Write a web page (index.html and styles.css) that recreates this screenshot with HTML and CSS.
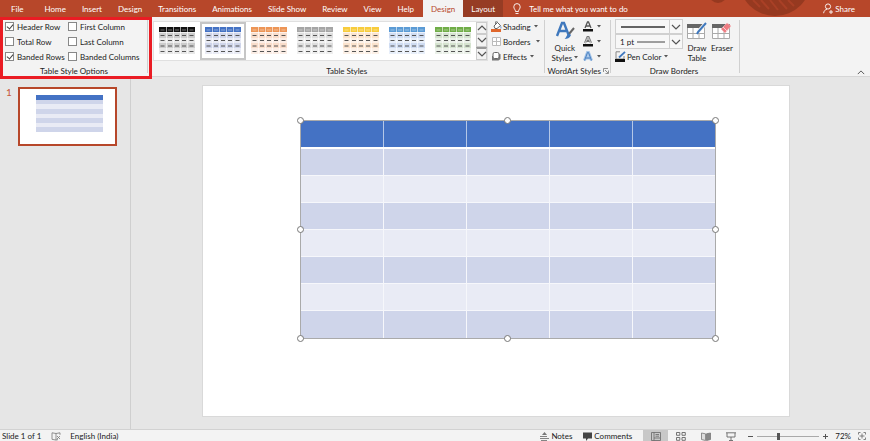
FILE: index.html
```html
<!DOCTYPE html>
<html lang="en">
<head>
  <meta charset="utf-8">
  <title>Presentation - Table Design</title>
  <link rel="stylesheet" href="styles.css">
</head>
<body>
  <svg class="symbols" aria-hidden="true">
    <symbol id="swatch" viewBox="0 0 36 28">
      <rect class="sw-band" width="36" height="27"/>
      <rect class="sw-light" y="11" width="36" height="5"/>
      <rect class="sw-light" y="21" width="36" height="6"/>
      <rect class="sw-head" width="36" height="5"/>
      <path class="sw-grid" d="M7.500 0v28M14.500 0v28M21.500 0v28M28.500 0v28M0 5.500h36"/>
      <path class="sw-dash-head" d="M1.500 3h4M9 3h4M16 3h4M23 3h4M30.500 3h4"/>
      <path class="sw-dash" d="M1.500 8.500h4M9 8.500h4M16 8.500h4M23 8.500h4M30.500 8.500h4M1.500 13.500h4M9 13.500h4M16 13.500h4M23 13.500h4M30.500 13.500h4M1.500 19h4M9 19h4M16 19h4M23 19h4M30.500 19h4M1.500 24.500h4M9 24.500h4M16 24.500h4M23 24.500h4M30.500 24.500h4"/>
    </symbol>
    <symbol id="chevron" viewBox="0 0 10 6"><path d="M1 1l4 4 4-4" fill="none" stroke="#555" stroke-width="1.200"/></symbol>
    <symbol id="caret" viewBox="0 0 4 3"><path d="M0 0h4L2 2.500z" fill="#555"/></symbol>
  </svg>

  <header class="tabbar">
    <nav class="tabs">
      <button class="tab file">File</button>
      <button class="tab">Home</button>
      <button class="tab">Insert</button>
      <button class="tab">Design</button>
      <button class="tab">Transitions</button>
      <button class="tab">Animations</button>
      <button class="tab">Slide Show</button>
      <button class="tab">Review</button>
      <button class="tab">View</button>
      <button class="tab">Help</button>
      <button class="tab context active">Design</button>
      <button class="tab context">Layout</button>
      <button class="tell-me">
        <svg width="8" height="12" viewBox="0 0 8 12" fill="none" stroke="#fff"><path d="M2.500 8.500C2.500 6.500.8 6 .8 3.800a3.200 3.200 0 0 1 6.400 0C7.200 6 5.500 6.500 5.500 8.500zM2.500 10.500h3" stroke-width=".9"/></svg>
        Tell me what you want to do
      </button>
    </nav>
    <svg class="ornament" width="130" height="17" viewBox="0 0 130 17" aria-hidden="true">
      <circle cx="40" cy="-6" r="9" fill="#963920"/>
      <circle cx="97" cy="-20" r="36" fill="#963920"/>
      <path d="M75 0l7 7M83 0l8 9M92 0l8 10M101 0l8 9M110 0l6 6" stroke="#a94026" stroke-width="2"/>
    </svg>
    <button class="share">
      <svg width="10" height="11" viewBox="0 0 10 11" fill="none" stroke="#fff" stroke-width=".9"><circle cx="5" cy="3.500" r="2.600"/><path d="M.6 10.200c.3-2.300 1.600-3.600 3.400-4M6 9h4M8 7v4"/></svg>
      Share
    </button>
  </header>

  <section class="ribbon">
    <div class="group options">
      <div class="group-body checks">
        <label><input type="checkbox" checked>Header Row</label>
        <label><input type="checkbox">First Column</label>
        <label><input type="checkbox">Total Row</label>
        <label><input type="checkbox">Last Column</label>
        <label><input type="checkbox" checked>Banded Rows</label>
        <label><input type="checkbox">Banded Columns</label>
      </div>
      <div class="group-name">Table Style Options</div>
      <div class="highlight"></div>
    </div>

    <div class="group table-styles">
      <div class="group-body">
        <div class="gallery">
          <button class="swatch black" aria-label="Black style"><svg><use href="#swatch"/></svg></button>
          <button class="swatch blue selected" aria-label="Blue style"><svg><use href="#swatch"/></svg></button>
          <button class="swatch orange" aria-label="Orange style"><svg><use href="#swatch"/></svg></button>
          <button class="swatch gray" aria-label="Gray style"><svg><use href="#swatch"/></svg></button>
          <button class="swatch gold" aria-label="Gold style"><svg><use href="#swatch"/></svg></button>
          <button class="swatch sky" aria-label="Light blue style"><svg><use href="#swatch"/></svg></button>
          <button class="swatch green" aria-label="Green style"><svg><use href="#swatch"/></svg></button>
          <div class="scroller">
            <button aria-label="Scroll up"><svg class="up" width="10" height="6"><use href="#chevron"/></svg></button>
            <button aria-label="Scroll down"><svg width="10" height="6"><use href="#chevron"/></svg></button>
            <button class="more" aria-label="More styles"><svg width="10" height="6"><use href="#chevron"/></svg></button>
          </div>
        </div>
        <div class="commands">
          <button class="command">
            <svg width="11" height="11" viewBox="0 0 11 11"><path d="M3 5l3.500-3.500L9.500 4.500 6 7.500H4z" fill="#fff" stroke="#666"/><path d="M4.500 3V.8h1.800V2" fill="none" stroke="#666" stroke-width=".8"/><path d="M9.500 4.500c1.300 1 1 3 .2 3.500z" fill="#3f7ac0"/><path d="M0 8h10v3H0z" fill="#e0672c"/></svg>
            Shading<svg class="caret"><use href="#caret"/></svg>
          </button>
          <button class="command borders">
            <svg width="11" height="11" viewBox="0 0 11 11"><path d="M1.500 1.500h8v8h-8zM5.500 1.500v8M1.500 5.500h8" fill="#fff" stroke="#bbb"/></svg>
            Borders<svg class="caret"><use href="#caret"/></svg>
          </button>
          <button class="command">
            <svg width="11" height="11" viewBox="0 0 11 11"><path d="M1 5v4.500h6.500L9.500 8V3z" fill="#777"/><rect x="2" y="1.500" width="6" height="6" rx="1.500" fill="#fff" stroke="#666"/></svg>
            Effects<svg class="caret"><use href="#caret"/></svg>
          </button>
        </div>
      </div>
      <div class="group-name">Table Styles</div>
    </div>

    <div class="group wordart">
      <div class="group-body">
        <button class="big-button">
          <svg width="20" height="20" viewBox="0 0 20 20"><path d="M2 15L7 2h2l5 13M4 10h7" fill="none" stroke="#3f78bd" stroke-width="2.400"/><path d="M19 7l-5 6" stroke="#666" stroke-width="2"/><path d="M14.500 12.500l1.500 1.500c-1 3-4 4-6.500 4 2-1 2-5 5-5.500z" fill="#3f78bd"/></svg>
          <span>Quick</span>
          <span>Styles<svg class="caret"><use href="#caret"/></svg></span>
        </button>
        <div class="art-tools">
          <button aria-label="Text fill"><svg width="12" height="11" viewBox="0 0 12 11"><path d="M3 7l2.500-6h1L9 7M4 5h4" fill="none" stroke="#555" stroke-width="1.300"/><path d="M1 8h10v2.500H1z" fill="#111"/></svg><svg class="caret"><use href="#caret"/></svg></button>
          <button aria-label="Text outline"><svg width="12" height="11" viewBox="0 0 12 11"><path d="M3 7l2.500-6h1L9 7M4 5h4" fill="none" stroke="#777" stroke-width="2"/><path d="M3.200 7l2.500-5.500h.6L8.800 7" fill="none" stroke="#fff" stroke-width=".6"/><path d="M1 8h10v2.500H1z" fill="#111"/></svg><svg class="caret"><use href="#caret"/></svg></button>
          <button aria-label="Text effects"><svg width="12" height="11" viewBox="0 0 12 11"><path d="M2.500 9.500l3-8h1l3 8M4 7h4" fill="none" stroke="#a4c4e8" stroke-width="3"/><path d="M2.500 9.500l3-8h1l3 8M4 7h4" fill="none" stroke="#4a80c0"/></svg><svg class="caret"><use href="#caret"/></svg></button>
        </div>
      </div>
      <div class="group-name with-launcher">WordArt Styles
        <button class="launcher" aria-label="WordArt dialog"><svg width="6" height="6" viewBox="0 0 6 6"><path d="M.5 4V.5H5M2 2l3 3M5.500 2.500v3h-3" fill="none" stroke="#777" stroke-width=".8"/></svg></button>
      </div>
    </div>

    <div class="group draw">
      <div class="group-body">
        <div class="pens">
          <div class="picker">
            <select aria-label="Pen style"><option label=" "></option></select>
            <svg class="pen-line" width="44" height="2"><path d="M0 1h44" stroke="#333" stroke-width="1.500"/></svg>
            <svg class="picker-arrow" width="10" height="6"><use href="#chevron"/></svg>
          </div>
          <div class="picker">
            <select aria-label="Pen weight"><option>1 pt</option></select>
            <svg class="pen-line" width="28" height="2"><path d="M0 1h28" stroke="#444"/></svg>
            <svg class="picker-arrow" width="10" height="6"><use href="#chevron"/></svg>
          </div>
          <button class="command">
            <svg width="11" height="11" viewBox="0 0 11 11"><path d="M5 .8H1V8h8V5" fill="none" stroke="#888"/><path d="M10 .8L4 6.500" stroke="#3f78bd" stroke-width="1.800"/><path d="M0 8h10v3H0z" fill="#111"/></svg>
            Pen Color<svg class="caret"><use href="#caret"/></svg>
          </button>
        </div>
        <button class="big-button">
          <svg width="20" height="20" viewBox="0 0 20 20"><path d="M.5 3.500h17v14H.5zM.5 12.500h17M6 6v11.500M12 6v11.500" fill="#fff" stroke="#aaa"/><path d="M0 3h18v4H0z" fill="#666"/><path d="M19 2l-8 9" stroke="#f3f3f3" stroke-width="4"/><path d="M19 2l-8 9-1 2" stroke="#3f78bd" stroke-width="2" fill="none"/></svg>
          <span>Draw</span>
          <span>Table</span>
        </button>
        <button class="big-button">
          <svg width="20" height="20" viewBox="0 0 20 20"><path d="M.5 3.500h17v14H.5zM.5 12.500h17M6 6v11.500M12 6v11.500" fill="#fff" stroke="#aaa"/><path d="M0 3h18v4H0z" fill="#666"/><path d="M9 8l6-6 4 3-6 7z" fill="#ee7c82" stroke="#f6c0c3" stroke-width=".6"/><path d="M11 6l4 4" stroke="#f8d0d2"/></svg>
          <span>Eraser</span>
        </button>
      </div>
      <div class="group-name">Draw Borders</div>
    </div>
    <button class="collapse" aria-label="Collapse ribbon"><svg class="up" width="8" height="5"><use href="#chevron"/></svg></button>
  </section>

  <main class="workspace">
    <aside class="slides">
      <span class="slide-number">1</span>
      <div class="thumbnail">
        <div class="mini-table">
          <i></i><i></i><i></i><i></i><i></i><i></i><i></i><i></i>
        </div>
      </div>
    </aside>
    <section class="stage">
      <div class="slide">
        <div class="table-frame">
          <table>
            <tbody>
              <tr><th></th><th></th><th></th><th></th><th></th></tr>
              <tr><td></td><td></td><td></td><td></td><td></td></tr>
              <tr><td></td><td></td><td></td><td></td><td></td></tr>
              <tr><td></td><td></td><td></td><td></td><td></td></tr>
              <tr><td></td><td></td><td></td><td></td><td></td></tr>
              <tr><td></td><td></td><td></td><td></td><td></td></tr>
              <tr><td></td><td></td><td></td><td></td><td></td></tr>
              <tr><td></td><td></td><td></td><td></td><td></td></tr>
            </tbody>
          </table>
          <span class="handle top left"></span>
          <span class="handle top center"></span>
          <span class="handle top right"></span>
          <span class="handle middle left"></span>
          <span class="handle middle right"></span>
          <span class="handle bottom left"></span>
          <span class="handle bottom center"></span>
          <span class="handle bottom right"></span>
        </div>
      </div>
    </section>
  </main>

  <footer class="statusbar">
    <span class="slide-count">Slide 1 of 1</span>
    <button class="proofing" aria-label="Spelling"><svg width="10" height="9" viewBox="0 0 10 9" fill="none" stroke="#777" stroke-width=".8"><path d="M5 1.500L1 .8v6.500l4 .8 2-.5M5 1.500V8M5 1.500L9 .8v2M6 4l3 3M9 4L6 7"/></svg></button>
    <button class="language">English (India)</button>
    <button class="notes"><svg width="9" height="9" viewBox="0 0 9 9"><path d="M4.500 0L7 3H2z" fill="#777"/><path d="M0 4.500h7M0 6.500h9M1 8.500h6" stroke="#777" stroke-width=".9"/></svg>Notes</button>
    <button class="comments"><svg width="9" height="9" viewBox="0 0 9 9"><path d="M0 .5h9v6H5L3 9V6.500H0z" fill="#444"/></svg>Comments</button>
    <div class="views">
      <button class="active" aria-label="Normal view"><svg width="10" height="9" viewBox="0 0 10 9" fill="none" stroke="#666" stroke-width=".8"><path d="M.5.500h9v8h-9zM3 .5v8M3 6h6M4.500 2.500h3.500M4.500 4.200h3.500"/></svg></button>
      <button aria-label="Slide sorter"><svg width="10" height="9" viewBox="0 0 10 9" fill="none" stroke="#666" stroke-width=".9"><path d="M.5.500h3.300v2.800H.5zM6 .5h3.300v2.800H6zM.5 5.500h3.300v2.800H.5zM6 5.500h3.300v2.800H6z"/></svg></button>
      <button aria-label="Reading view"><svg width="10" height="9" viewBox="0 0 10 9"><path d="M.5 1l4 .8v6.700l-4-1z" fill="#ddd" stroke="#777" stroke-width=".8"/><path d="M9.500 1l-4 .8v6.700l4-1z" fill="#888" stroke="#777" stroke-width=".8"/></svg></button>
      <button aria-label="Slide show"><svg width="10" height="9" viewBox="0 0 10 9" fill="none" stroke="#666" stroke-width=".9"><path d="M0 .8h10M1 1v4h8V1M5 5v3M3 8.500h4"/></svg></button>
    </div>
    <div class="zoom">
      <button aria-label="Zoom out"><svg width="5" height="5"><path d="M0 2.500h5" stroke="#555"/></svg></button>
      <input type="range" min="0" max="100" value="33" aria-label="Zoom">
      <button aria-label="Zoom in"><svg width="5" height="5"><path d="M0 2.500h5M2.500 0v5" stroke="#555"/></svg></button>
    </div>
    <button class="percent">72%</button>
    <button class="fit" aria-label="Fit to window"><svg width="8" height="8" viewBox="0 0 8 8" fill="none" stroke="#666" stroke-width=".8"><path d="M.5 2.500v-2h2M5.500.500h2v2M7.500 5.500v2h-2M2.500 7.500h-2v-2M4 1.500v5M1.500 4h5"/></svg></button>
  </footer>
</body>
</html>
```

FILE: styles.css
```css
* {
  box-sizing: border-box;
}

body {
  margin: 0;
  min-height: 100vh;
  display: flex;
  flex-direction: column;
  font-family: Lato, "Open Sans", sans-serif;
  font-size: 8px;
  line-height: 10px;
  color: #222;
  background: #e6e6e6;
}

button,
select {
  font: inherit;
  color: inherit;
  background: none;
  border: none;
  padding: 0;
  margin: 0;
  white-space: nowrap;
}

svg {
  display: block;
  flex: none;
}

.symbols {
  position: absolute;
  width: 0;
  height: 0;
}

.caret {
  display: inline-block;
  width: 4px;
  height: 3px;
  margin-left: 2px;
}

.up {
  transform: rotate(180deg);
}

/* tab bar */
.tabbar {
  display: flex;
  justify-content: space-between;
  height: 17px;
  background: #b7472a;
  color: #fff;
}

.tabs {
  display: flex;
}

.tab {
  padding: 0 8px;
}

.tab.file {
  padding: 0 13px 0 11px;
}

.tab.context {
  background: #963c24;
}

.tab.context.active {
  margin-left: 1px;
  background: #f3f3f3;
  color: #b7472a;
}

.tell-me,
.share {
  display: flex;
  align-items: center;
  gap: 8px;
  padding: 0 10px;
}

.ornament {
  margin-left: auto;
}

.share {
  gap: 2px;
  padding: 0 15px;
}

/* ribbon */
.ribbon {
  display: flex;
  height: 60px;
  background: #f3f3f3;
  border-bottom: 1px solid #d6d6d6;
}

.group {
  display: flex;
  flex-direction: column;
  position: relative;
  padding: 2px 5px 0;
}

.group::after {
  content: "";
  position: absolute;
  right: 0;
  top: 3px;
  bottom: 3px;
  border-right: 1px solid #d0d0d0;
}

.group-body {
  display: flex;
  height: 47px;
}

.group-name {
  text-align: center;
}

.options {
  width: 148px;
}

.checks {
  display: grid;
  grid-template-columns: 63px 1fr;
  grid-auto-rows: 15px;
}

.checks label {
  display: flex;
  align-items: center;
  gap: 3px;
  white-space: nowrap;
}

.checks input {
  appearance: none;
  position: relative;
  width: 9px;
  height: 9px;
  margin: 0;
  background: #fff;
  border: 1px solid #888;
}

.checks input:checked::after {
  content: "";
  position: absolute;
  left: 2px;
  top: 0;
  width: 3px;
  height: 5px;
  border: solid #444;
  border-width: 0 1px 1px 0;
  transform: rotate(40deg);
}

.highlight {
  position: absolute;
  left: 0;
  top: 0;
  width: 152px;
  height: 62px;
  border: 3px solid #ea1c24;
  z-index: 1;
  pointer-events: none;
}

.table-styles .group-body {
  gap: 3px;
}

.gallery {
  display: flex;
  height: 40px;
  margin-top: 2px;
  background: #fff;
  border: 1px solid #e0e0e0;
}

.swatch {
  width: 46px;
  padding: 3px;
  border: 2px solid transparent;
}

.swatch.selected {
  border-color: #c6c6c6;
}

.swatch svg {
  width: 36px;
  height: 28px;
}

.sw-band { fill: var(--band); }
.sw-light { fill: var(--light); }
.sw-head { fill: var(--head); }
.sw-grid { stroke: #fff; stroke-opacity: 0.6; }
.sw-dash { stroke: #555; }
.sw-dash-head { stroke: #fff; stroke-opacity: 0.4; }

.black { --head: #111; --band: #ccc; --light: #e8e8e8; }
.blue { --head: #4472c4; --band: #cfd5ea; --light: #e9ebf5; }
.orange { --head: #ed9556; --band: #f9ddcb; --light: #fceee6; }
.gray { --head: #a5a5a5; --band: #dedede; --light: #efefef; }
.gold { --head: #f8cc3c; --band: #fbe3cd; --light: #fdf1e7; }
.sky { --head: #5b9bd5; --band: #cfdcf2; --light: #e8effa; }
.green { --head: #70ad47; --band: #d5e3cf; --light: #ebf1e9; }

.scroller {
  display: flex;
  flex-direction: column;
  width: 11px;
  background: #f3f3f3;
}

.scroller button {
  display: flex;
  flex: 1;
  align-items: center;
  justify-content: center;
  border: 1px solid #ccc;
}

.scroller .more {
  border-top: 2px solid #999;
}

.commands {
  display: flex;
  flex-direction: column;
}

.command {
  display: flex;
  align-items: center;
  gap: 1px;
  height: 15px;
}

.command.borders .caret {
  margin-left: 5px;
}

.wordart {
  padding: 2px 2px 0;
}

.wordart .group-body {
  gap: 4px;
  padding-left: 4px;
}

.big-button {
  display: flex;
  flex-direction: column;
  align-items: center;
  align-self: flex-start;
  padding-top: 2px;
}

.big-button svg:first-child {
  margin-bottom: 2px;
}

.art-tools {
  display: flex;
  flex-direction: column;
}

.art-tools button {
  display: flex;
  align-items: center;
  gap: 1px;
  height: 15px;
}

.with-launcher {
  display: flex;
  align-items: center;
  gap: 2px;
  white-space: nowrap;
}

.draw {
  padding: 2px 7px 0 4px;
}

.draw .group-body {
  gap: 4px;
}

.pens {
  width: 68px;
}

.picker {
  position: relative;
  height: 15px;
}

.picker select {
  appearance: none;
  display: block;
  width: 100%;
  height: 15px;
  padding-left: 4px;
  border: 1px solid #d0d0d0;
  background: #f7f7f7;
}

.pen-line {
  position: absolute;
  right: 18px;
  top: 7px;
}

.picker-arrow {
  position: absolute;
  right: 2px;
  top: 5px;
}

.picker::after {
  content: "";
  position: absolute;
  right: 13px;
  top: 0;
  bottom: 0;
  border-left: 1px solid #d0d0d0;
}

.collapse {
  align-self: flex-end;
  margin-left: auto;
  padding: 0 5px 1px;
}

/* workspace */
.workspace {
  display: flex;
  flex: 1;
}

.slides {
  display: flex;
  width: 131px;
  padding: 10px 13px 0 6px;
  border-right: 1px solid #cfcfcf;
}

.slide-number {
  width: 12px;
  font-size: 10px;
  color: #c7583a;
}

.thumbnail {
  flex: 1;
  align-self: flex-start;
  aspect-ratio: 99 / 59;
  padding: 6px 12px 12px 16px;
  background: #fff;
  border: 2px solid #b7472a;
}

.mini-table {
  display: flex;
  flex-direction: column;
  height: 100%;
}

.mini-table i {
  flex: 1;
  background: #e9ebf5;
}

.mini-table i:nth-child(even) {
  background: #cfd5ea;
}

.mini-table i:first-child {
  background: #4472c4;
}

.stage {
  flex: 1;
  padding: 8px 80px 12px 71px;
}

.slide {
  aspect-ratio: 588 / 332;
  padding: 34px 73px 77px 97px;
  background: #fff;
  border: 1px solid #d9d9d9;
}

.table-frame {
  position: relative;
  height: 100%;
  border: 1px solid #aaa;
}

table {
  width: 100%;
  height: 100%;
  table-layout: fixed;
  border-collapse: collapse;
}

tr {
  height: 12.5%;
}

th,
td {
  padding: 0;
  border: 1px solid #f6f7fb;
}

tr > :first-child { border-left: none; }
tr > :last-child { border-right: none; }
tr:last-child td { border-bottom: none; }

th {
  background: #4472c4;
  border-color: #b4c7e7;
  border-top: none;
  border-bottom: 2px solid #fff;
}

td {
  background: #e9ebf5;
}

tr:nth-child(even) td {
  background: #cfd5ea;
}

.handle {
  position: absolute;
  width: 7px;
  height: 7px;
  margin: -4px;
  background: #fff;
  border: 1px solid #777;
  border-radius: 50%;
}

.handle.top { top: 0; }
.handle.middle { top: 50%; }
.handle.bottom { bottom: 0; }
.handle.left { left: 0; }
.handle.center { left: 50%; }
.handle.right { right: 0; }

/* status bar */
.statusbar {
  display: flex;
  align-items: center;
  height: 13px;
  padding: 0 4px 0 2px;
  background: #f3f3f3;
  border-top: 1px solid #d2d2d2;
}

.statusbar button {
  display: flex;
  align-items: center;
}

.proofing {
  margin: 0 9px 0 10px;
}

.statusbar .notes {
  gap: 2px;
  margin-left: auto;
}

.statusbar .comments {
  gap: 2px;
  margin: 0 11px;
}

.views {
  display: flex;
}

.views button {
  justify-content: center;
  width: 25px;
  height: 12px;
}

.views .active {
  background: #c8c8c8;
}

.zoom {
  display: flex;
  align-items: center;
  gap: 4px;
  margin: 0 7px 0 5px;
}

.zoom input {
  appearance: none;
  width: 62px;
  height: 8px;
  margin: 0;
  background: linear-gradient(#aaa, #aaa) center / 100% 1px no-repeat;
}

.zoom input::-webkit-slider-thumb {
  appearance: none;
  width: 3px;
  height: 7px;
  background: #555;
}

.statusbar .fit {
  margin-left: 7px;
}
```
